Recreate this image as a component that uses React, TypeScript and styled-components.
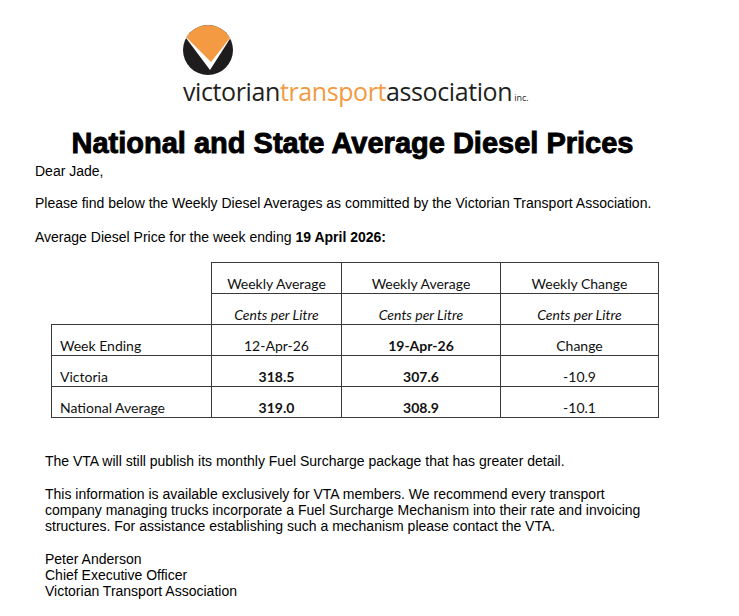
import React from 'react';
import styled, { createGlobalStyle } from 'styled-components';

const GlobalStyle = createGlobalStyle`
  html, body {
    margin: 0;
    padding: 0;
    background: #ffffff;
  }
  body {
    font-family: "Liberation Sans", Arial, sans-serif;
    color: #000000;
  }
`;

const Page = styled.div`
  width: 739px;
  box-sizing: border-box;
  padding: 25px 0 0 0;
`;

const LogoBlock = styled.div`
  margin-left: 183px;
  display: flex;
  flex-direction: column;
  align-items: flex-start;
`;

const Mark = styled.svg`
  width: 50px;
  height: 50px;
  display: block;
`;

const Wordmark = styled.div`
  margin-top: 1px;
  font-family: "Open Sans", "Noto Sans", sans-serif;
  font-weight: 400;
  font-size: 25px;
  line-height: 30px;
  letter-spacing: -0.4px;
  color: #231f20;
  white-space: nowrap;
`;

const Orange = styled.span`
  color: #f39a43;
`;

const Inc = styled.span`
  font-size: 9px;
  letter-spacing: 0;
  margin-left: 2px;
`;

const Title = styled.h1`
  margin: 14px 0 0 0;
  width: 705px;
  text-align: center;
  font-family: "Liberation Sans", Arial, sans-serif;
  font-size: 29px;
  line-height: 32px;
  font-weight: 700;
  -webkit-text-stroke: 0.9px #000;
`;

const Letter = styled.div`
  padding-left: 35px;
  font-size: 14px;
  line-height: 16px;
`;

const Para = styled.p<{ $gap?: number }>`
  margin: ${(p) => p.$gap ?? 0}px 0 0 0;
`;

const TableWrap = styled.div`
  margin: 17px 0 0 51px;
`;

const Grid = styled.table`
  border-collapse: collapse;
  font-family: Lato, "Noto Sans", sans-serif;
  font-size: 14px;
  color: #111;
`;

const Cell = styled.td<{ $w?: number; $left?: boolean; $blank?: boolean; $bold?: boolean; $italic?: boolean }>`
  width: ${(p) => (p.$w ? `${p.$w}px` : 'auto')};
  height: 31px;
  box-sizing: border-box;
  padding: 0 8px 1px 8px;
  vertical-align: bottom;
  text-align: ${(p) => (p.$left ? 'left' : 'center')};
  border: ${(p) => (p.$blank ? 'none' : '1px solid #3a3a3a')};
  font-weight: ${(p) => (p.$bold ? 700 : 400)};
  font-style: ${(p) => (p.$italic ? 'italic' : 'normal')};
  line-height: 17px;
  white-space: nowrap;
`;

const Footer = styled.div`
  padding-left: 45px;
  margin-top: 35px;
  font-size: 14px;
  line-height: 16px;
`;

const LogoMark = () => (
  <Mark viewBox="0 0 50 50">
    <defs>
      <clipPath id="vta-circle">
        <circle cx="25" cy="25" r="25" />
      </clipPath>
    </defs>
    <g clipPath="url(#vta-circle)">
      <rect x="0" y="0" width="50" height="50" fill="#1f1c1d" />
      <polygon points="0,9 27,45 50,9" fill="#ffffff" />
      <polygon points="0,0 50,0 50,9 28,37 3,12 0,12" fill="#f39a43" />
    </g>
  </Mark>
);

const rows = [
  { label: 'Week Ending', a: '12-Apr-26', b: '19-Apr-26', c: 'Change', boldA: false },
  { label: 'Victoria', a: '318.5', b: '307.6', c: '-10.9', boldA: true },
  { label: 'National Average', a: '319.0', b: '308.9', c: '-10.1', boldA: true },
];

const App: React.FC = () => {
  return (
    <>
      <GlobalStyle />
      <Page>
        <LogoBlock>
          <LogoMark />
          <Wordmark>
            victorian<Orange>transport</Orange>association<Inc>inc.</Inc>
          </Wordmark>
        </LogoBlock>

        <Title>National and State Average Diesel Prices</Title>

        <Letter>
          <Para $gap={4}>Dear Jade,</Para>
          <Para $gap={16}>
            Please find below the Weekly Diesel Averages as committed by the Victorian Transport Association.
          </Para>
          <Para $gap={18}>
            Average Diesel Price for the week ending <b>19 April 2026:</b>
          </Para>
        </Letter>

        <TableWrap>
          <Grid>
            <tbody>
              <tr>
                <Cell $w={160} $blank />
                <Cell $w={130}>Weekly Average</Cell>
                <Cell $w={159}>Weekly Average</Cell>
                <Cell $w={158}>Weekly Change</Cell>
              </tr>
              <tr>
                <Cell $blank />
                <Cell $italic>Cents per Litre</Cell>
                <Cell $italic>Cents per Litre</Cell>
                <Cell $italic>Cents per Litre</Cell>
              </tr>
              {rows.map((r) => (
                <tr key={r.label}>
                  <Cell $left>{r.label}</Cell>
                  <Cell $bold={r.boldA}>{r.a}</Cell>
                  <Cell $bold>{r.b}</Cell>
                  <Cell>{r.c}</Cell>
                </tr>
              ))}
            </tbody>
          </Grid>
        </TableWrap>

        <Footer>
          <Para>The VTA will still publish its monthly Fuel Surcharge package that has greater detail.</Para>
          <Para $gap={17}>
            This information is available exclusively for VTA members. We recommend every transport
            <br />
            company managing trucks incorporate a Fuel Surcharge Mechanism into their rate and invoicing
            <br />
            structures. For assistance establishing such a mechanism please contact the VTA.
          </Para>
          <Para $gap={17}>
            Peter Anderson
            <br />
            Chief Executive Officer
            <br />
            Victorian Transport Association
          </Para>
        </Footer>
      </Page>
    </>
  );
};

export default App;
